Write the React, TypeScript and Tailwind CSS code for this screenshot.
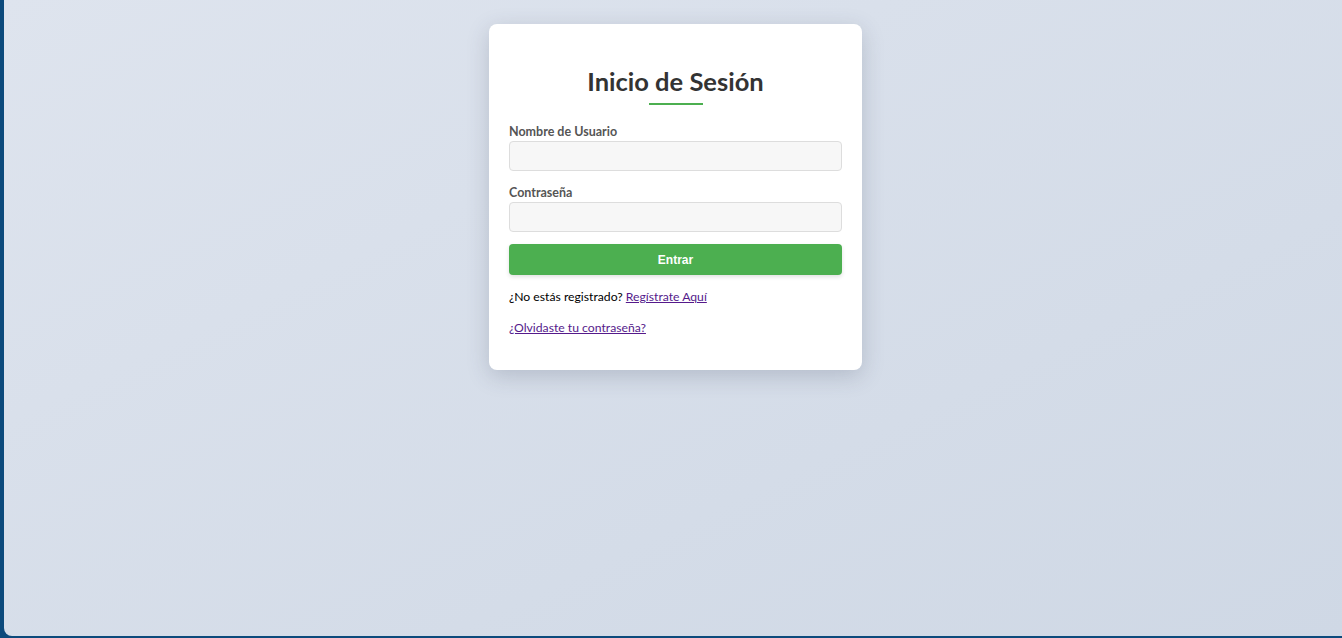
export default function App() {
  return (
    <div className="h-screen w-full bg-[#0c4a7c] pl-1 pb-0.5">
      <div className="h-full w-full rounded-bl-lg bg-gradient-to-br from-[#dee4ee] to-[#cfd8e5] flex justify-center pl-[5px] font-['Lato','Noto_Sans',sans-serif]">
        <div className="mt-6 h-fit w-[373px] rounded-lg bg-white px-5 pt-[42px] pb-[34px] shadow-[0_6px_22px_rgba(60,70,90,0.22)]">
          {/* Title */}
          <h2 className="text-center text-[25.5px] leading-[30px] font-bold text-[#333]">
            Inicio de Sesión
          </h2>
          <div className="mx-auto mt-[7px] h-[2px] w-[54px] bg-[#4caf50]"></div>

          {/* Username */}
          <label className="mt-[19px] block text-[12.5px] leading-4 font-bold text-[#555]">
            Nombre de Usuario
          </label>
          <input
            type="text"
            className="mt-[1px] block h-[30px] w-full rounded border border-[#ddd] bg-[#f7f7f7]"
          />

          {/* Password */}
          <label className="mt-[14px] block text-[12.5px] leading-4 font-bold text-[#555]">
            Contraseña
          </label>
          <input
            type="password"
            className="mt-[1px] block h-[30px] w-full rounded border border-[#ddd] bg-[#f7f7f7]"
          />

          <button className="mt-3 block h-[31px] w-full rounded bg-[#4caf50] text-[12px] font-bold text-white font-['Liberation_Sans',Arial,sans-serif] shadow-[0_2px_4px_rgba(0,0,0,0.12)]">
            Entrar
          </button>

          <p className="mt-[14px] text-[12.2px] leading-4 text-black">
            ¿No estás registrado?{" "}
            <a href="#" className="text-[#551a8b] underline">
              Regístrate Aquí
            </a>
          </p>
          <p className="mt-[15px] text-[12.2px] leading-4">
            <a href="#" className="text-[#551a8b] underline">
              ¿Olvidaste tu contraseña?
            </a>
          </p>
        </div>
      </div>
    </div>
  )
}
